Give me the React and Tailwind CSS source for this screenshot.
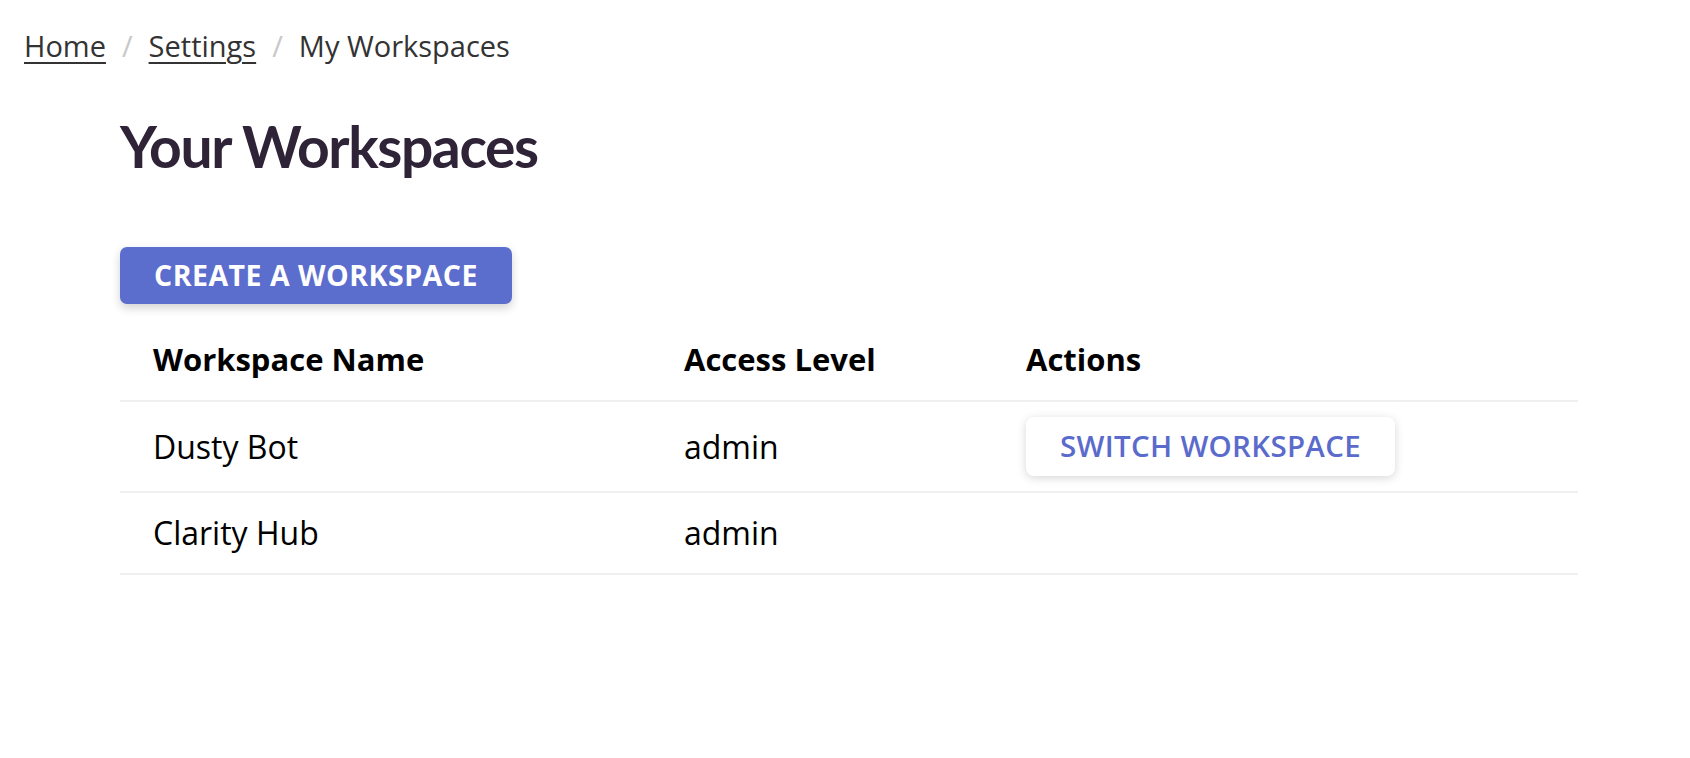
import React from 'react'

const workspaces = [
    { name: 'Dusty Bot', access: 'admin', current: false },
    { name: 'Clarity Hub', access: 'admin', current: true },
]

const App = () => {
    return (
        <div className="min-h-screen bg-white text-black font-['Open_Sans',sans-serif]">
            {/* breadcrumb */}
            <nav className="flex items-center pl-[24px] pt-[25px] text-[29px] leading-[42px] text-[#333]">
                <a href="#" className="underline underline-offset-[5px] decoration-[2px]">Home</a>
                <span className="mx-[16px] text-[#c8c8c8]">/</span>
                <a href="#" className="underline underline-offset-[5px] decoration-[2px]">Settings</a>
                <span className="mx-[16px] text-[#c8c8c8]">/</span>
                <span>My Workspaces</span>
            </nav>

            <main className="ml-[120px] mr-[112px]">
                <h1 className="mt-[47px] font-['Lato',sans-serif] font-bold text-[57px] leading-[64px] text-[#2e2337] tracking-[-1.4px]">
                    Your Workspaces
                </h1>

                <button className="mt-[69px] h-[57px] px-[34px] rounded-[7px] bg-[#5b6dcd] text-white font-bold text-[28.5px] tracking-[0.5px] shadow-[0_4px_10px_rgba(0,0,0,0.18)]">
                    CREATE A WORKSPACE
                </button>

                {/* table */}
                <div className="mt-[14px]">
                    <div className="grid grid-cols-[531px_342px_1fr] border-b-2 border-[#efefef] font-bold text-[31px]">
                        <div className="px-[33px] py-[19px] leading-[44px]">Workspace Name</div>
                        <div className="px-[33px] py-[19px] leading-[44px]">Access Level</div>
                        <div className="px-[33px] py-[19px] leading-[44px]">Actions</div>
                    </div>
                    {workspaces.map((ws) => (
                        <div key={ws.name} className="grid grid-cols-[531px_342px_1fr] items-center border-b-2 border-[#efefef] text-[32px]">
                            <div className="px-[33px] py-[18px] leading-[44px]">{ws.name}</div>
                            <div className="px-[33px] py-[18px] leading-[44px]">{ws.access}</div>
                            <div className="px-[33px]">
                                {!ws.current && (
                                    <button className="my-[15px] h-[59px] px-[34px] rounded-[8px] bg-white text-[#5b6bcc] font-semibold text-[29.5px] tracking-[0.3px] shadow-[0_2px_10px_rgba(0,0,0,0.16)]">
                                        SWITCH WORKSPACE
                                    </button>
                                )}
                            </div>
                        </div>
                    ))}
                </div>
            </main>
        </div>
    )
}

export default App
